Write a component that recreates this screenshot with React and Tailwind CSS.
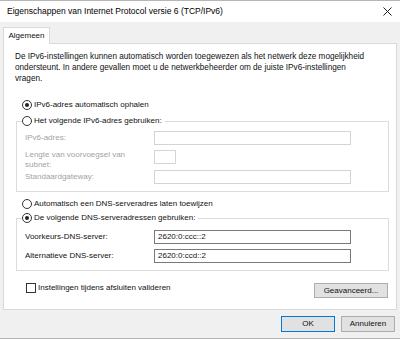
import React from "react";

const font = { fontFamily: '"Liberation Sans", Arial, sans-serif' };

function Radio({ checked }) {
  return (
    <span className="w-[10px] h-[10px] rounded-full border border-[#333] bg-white flex items-center justify-center shrink-0">
      {checked && <span className="w-[4px] h-[4px] rounded-full bg-[#222]" />}
    </span>
  );
}

function RadioRow({ checked, children, className = "" }) {
  return (
    <div className={`flex items-center gap-[2px] h-[12px] ${className}`}>
      <Radio checked={checked} />
      <span className="text-[8px] leading-[12px] text-[#111]">{children}</span>
    </div>
  );
}

function Field({ label, value, disabled, small, twoLine }) {
  return (
    <div className={`flex items-start ${twoLine ? "h-[20px]" : "h-[14px]"}`}>
      <div
        className={`w-[129px] text-[8px] ${twoLine ? "leading-[10px]" : "leading-[14px]"} ${
          disabled ? "text-[#a3a3a3]" : "text-[#111]"
        }`}
      >
        {label}
      </div>
      <div
        className={`h-[14px] ${small ? "w-[22px]" : "w-[197px]"} border ${
          disabled ? "border-[#d4d4d4] bg-white" : "border-[#7a7a7a] bg-white"
        } text-[8px] leading-[12px] px-[3px] text-[#111]`}
      >
        {value}
      </div>
    </div>
  );
}

export default function App() {
  return (
    <div className="w-[400px] h-[339px] bg-[#f0f0f0] border-t border-b border-[#b5b5b5] flex flex-col" style={font}>
      {/* Title bar */}
      <div className="h-[21px] bg-white flex items-center justify-between pl-[7px] pr-[8px]">
        <span className="text-[8.5px] text-black">Eigenschappen van Internet Protocol versie 6 (TCP/IPv6)</span>
        <svg width="9" height="9" viewBox="0 0 9 9">
          <path d="M0.5 0.5 L8.5 8.5 M8.5 0.5 L0.5 8.5" stroke="#222" strokeWidth="1" />
        </svg>
      </div>

      <div className="pt-[5px] px-[3px]">
        <div className="relative z-10 -mb-px w-[47px] h-[17px] bg-white border border-b-0 border-[#d9d9d9] flex items-center justify-center">
          <span className="text-[8px] text-[#111]">Algemeen</span>
        </div>

        <div className="h-[267px] bg-white border border-[#d9d9d9] pl-[12px] pr-[7px] pt-[7px]">
          <p className="-ml-px text-[8.2px] leading-[11px] text-[#111]">
            De IPv6-instellingen kunnen automatisch worden toegewezen als het netwerk deze mogelijkheid
            <br />
            ondersteunt. In andere gevallen moet u de netwerkbeheerder om de juiste IPv6-instellingen
            <br />
            vragen.
          </p>

          <RadioRow checked className="ml-[6px] mt-[15px]">IPv6-adres automatisch ophalen</RadioRow>

          <fieldset className="mt-[4px] border border-[#dcdcdc] pl-[8px] pb-[7px]">
            <legend className="ml-[-3px] pr-[3px]">
              <RadioRow>Het volgende IPv6-adres gebruiken:</RadioRow>
            </legend>
            <div className="mt-[4px] flex flex-col gap-[5px]">
              <Field label="IPv6-adres:" disabled />
              <div className="-mb-[5px]">
                <Field
                  label={<>Lengte van voorvoegsel van<br />subnet:</>}
                  disabled
                  small
                  twoLine
                />
              </div>
              <Field label="Standaardgateway:" disabled />
            </div>
          </fieldset>

          <RadioRow className="ml-[6px] mt-[6px]">Automatisch een DNS-serveradres laten toewijzen</RadioRow>

          <fieldset className="mt-[2px] border border-[#dcdcdc] pl-[8px] pb-[7px]">
            <legend className="ml-[-3px] pr-[3px]">
              <RadioRow checked>De volgende DNS-serveradressen gebruiken:</RadioRow>
            </legend>
            <div className="mt-[6px] flex flex-col gap-[5px]">
              <Field label="Voorkeurs-DNS-server:" value="2620:0:ccc::2" />
              <Field label="Alternatieve DNS-server:" value="2620:0:ccd::2" />
            </div>
          </fieldset>

          <div className="mt-[12px] flex items-start justify-between">
            <div className="ml-[10px] flex items-center gap-[2px] h-[10px]">
              <span className="w-[10px] h-[10px] border border-[#333] bg-white shrink-0" />
              <span className="text-[8px] text-[#111]">Instellingen tijdens afsluiten valideren</span>
            </div>
            <button className="mr-px w-[74px] h-[15px] bg-[#e1e1e1] border border-[#adadad] text-[8px] text-[#111] leading-[13px]">
              Geavanceerd...
            </button>
          </div>
        </div>
      </div>

      <div className="mt-[6px] pr-[5px] flex justify-end gap-[6px]">
        <button className="w-[54px] h-[16px] bg-[#e1e1e1] border border-[#0078d7] text-[8px] text-[#111]">OK</button>
        <button className="w-[54px] h-[16px] bg-[#e1e1e1] border border-[#adadad] text-[8px] text-[#111]">Annuleren</button>
      </div>
    </div>
  );
}
